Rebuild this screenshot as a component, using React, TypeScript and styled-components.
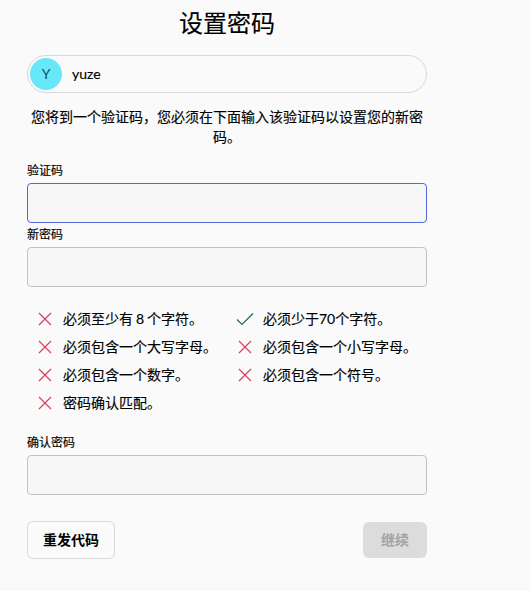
import React from "react";
import styled, { createGlobalStyle } from "styled-components";

const Global = createGlobalStyle`
  * { box-sizing: border-box; }
  body {
    margin: 0;
    background: #fafafa;
    color: #000;
    font-family: Lato, "Noto Sans CJK SC", sans-serif;
    -webkit-text-stroke: 0.15px currentColor;
  }
`;
const Page = styled.main`
  width: 400px;
  height: 591px;
  margin-left: 27px;
  display: flex;
  flex-direction: column;
`;
const Title = styled.h1`
  margin: 7px 0 0;
  font-size: 24px;
  line-height: 32px;
  font-weight: 400;
  text-align: center;
`;
const Account = styled.div`
  margin-top: 16px;
  height: 38px;
  flex: none;
  border: 1px solid #d9d9d9;
  border-radius: 19px;
  display: flex;
  align-items: center;
  gap: 10px;
  padding-left: 2px;
  font-size: 14px;
`;
const AccountName = styled.span`
  padding-bottom: 2px;
`;
const Avatar = styled.span`
  width: 32px;
  height: 32px;
  padding-bottom: 2px;
  border-radius: 50%;
  background: #67e8f9;
  color: #164e63;
  display: flex;
  align-items: center;
  justify-content: center;
  -webkit-text-stroke: 0;
`;
const Description = styled.p`
  margin: 14px 0 16px;
  font-size: 14px;
  line-height: 20px;
  text-align: center;
`;
const Field = styled.label`
  display: flex;
  flex-direction: column;
  gap: 4px;
  font-size: 12px;
  line-height: 16px;
  margin-bottom: 4px;
`;
const Input = styled.input<{ $active?: boolean }>`
  height: 40px;
  width: 100%;
  border: 1px solid ${(p) => (p.$active ? "#5469d4" : "#c3c3c3")};
  border-radius: 4px;
  background: #f7f7f7;
  outline: none;
`;
const Rules = styled.ul`
  list-style: none;
  margin: 14px 0 18px;
  padding: 0;
  display: grid;
  grid-template-columns: 200px 200px;
  grid-auto-rows: 28px;
`;
const Rule = styled.li`
  display: flex;
  align-items: center;
  gap: 8px;
  padding-left: 8px;
  font-size: 14px;
  line-height: 20px;
  word-spacing: -0.6px;
  white-space: nowrap;
`;
const Mark = styled.svg<{ $ok?: boolean }>`
  width: 20px;
  height: 20px;
  fill: none;
  stroke: ${(p) => (p.$ok ? "#187058" : "#d6405f")};
  stroke-width: 1.2;
`;
const Actions = styled.footer`
  margin-top: 22px;
  display: flex;
  justify-content: space-between;
  align-items: center;
`;
const Button = styled.button<{ $primary?: boolean }>`
  height: ${(p) => (p.$primary ? 36 : 38)}px;
  width: ${(p) => (p.$primary ? 64 : 88)}px;
  padding: 0;
  border: ${(p) => (p.$primary ? "0" : "1px solid #d9d9d9")};
  border-radius: 6px;
  background: ${(p) => (p.$primary ? "#dcdcdc" : "#fafafa")};
  color: ${(p) => (p.$primary ? "#a3a3a3" : "#000")};
  font: 600 14px/20px Lato, "Noto Sans CJK SC", sans-serif;
  -webkit-text-stroke: 0;
`;

const rules = [
  { text: "必须至少有 8 个字符。" },
  { text: "必须少于70个字符。", ok: true },
  { text: "必须包含一个大写字母。" },
  { text: "必须包含一个小写字母。" },
  { text: "必须包含一个数字。" },
  { text: "必须包含一个符号。" },
  { text: "密码确认匹配。" },
];

export default function App() {
  return (
    <Page lang="zh-CN">
      <Global />
      <Title>设置密码</Title>
      <Account>
        <Avatar>Y</Avatar>
        <AccountName>yuze</AccountName>
      </Account>
      <Description>您将到一个验证码，您必须在下面输入该验证码以设置您的新密码。</Description>
      <Field>验证码<Input $active /></Field>
      <Field>新密码<Input type="password" /></Field>
      <Rules>
        {rules.map((r) => (
          <Rule key={r.text}>
            <Mark viewBox="0 0 20 20" $ok={r.ok}>
              <path d={r.ok ? "M2 10.5l5 5L18 4.5" : "M4 4l12 12M16 4L4 16"} />
            </Mark>
            {r.text}
          </Rule>
        ))}
      </Rules>
      <Field>确认密码<Input type="password" /></Field>
      <Actions>
        <Button>重发代码</Button>
        <Button $primary disabled>继续</Button>
      </Actions>
    </Page>
  );
}
